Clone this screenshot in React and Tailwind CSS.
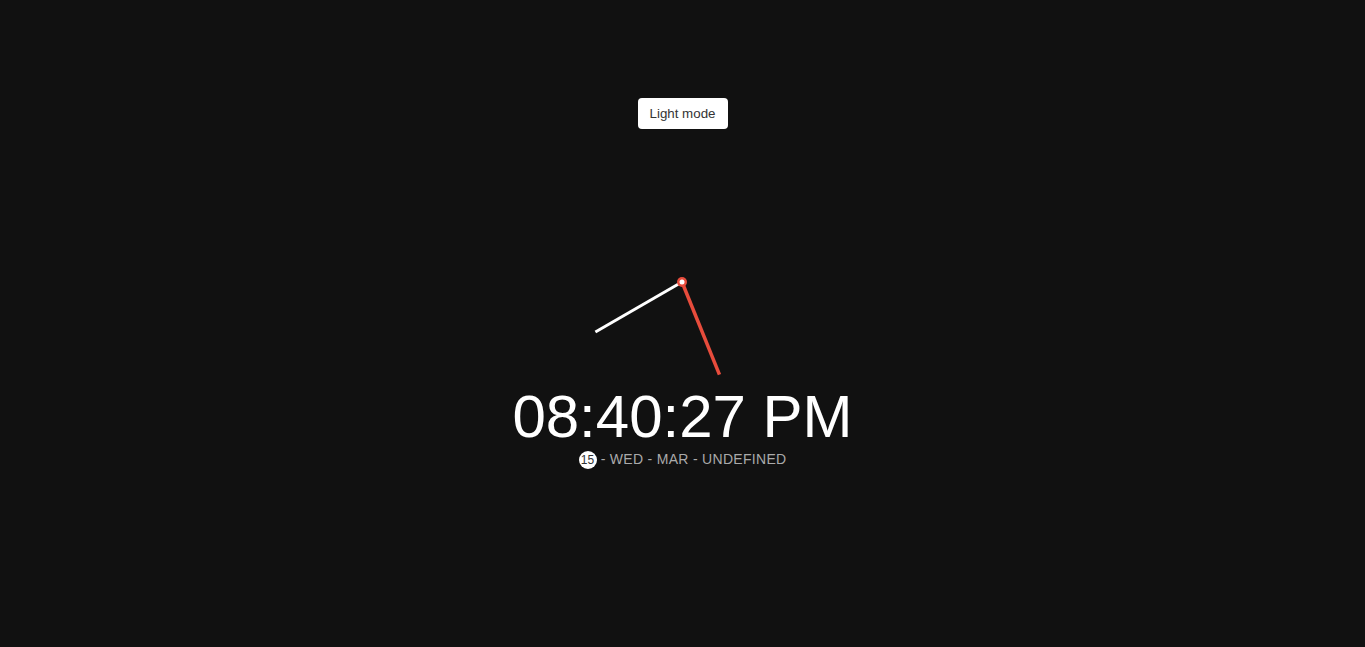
export default function App() {
  const cx = 100;
  const cy = 100;
  const hand = (deg, len) => {
    const r = (deg * Math.PI) / 180;
    return { x2: cx + len * Math.sin(r), y2: cy - len * Math.cos(r) };
  };
  const minute = hand(240, 100);
  const second = hand(158, 100);
  return (
    <div
      className="h-screen w-full overflow-hidden bg-[#111111] flex flex-col items-center"
      style={{ fontFamily: '"Liberation Sans", Arial, sans-serif' }}
    >
      <button className="mt-[98px] bg-white text-[#333333] rounded-[4px] w-[90px] py-2 text-[13.333px] leading-[15px] border-0 cursor-pointer">
        Light mode
      </button>
      <div className="mt-[53px] flex flex-col items-center">
        <svg width="200" height="200" viewBox="0 0 200 200" className="block">
          <line x1={cx} y1={cy} x2={minute.x2} y2={minute.y2} stroke="#ffffff" strokeWidth="3" strokeLinecap="butt" />
          <line x1={cx} y1={cy} x2={second.x2} y2={second.y2} stroke="#e74c3c" strokeWidth="3.5" strokeLinecap="butt" />
          <circle cx={cx} cy={cy} r="5" fill="#e74c3c" />
          <circle cx={cx} cy={cy} r="2.5" fill="#ffffff" />
        </svg>
        <div className="text-white text-[60px] leading-[69px]">08:40:27 PM</div>
        <div className="text-[#aaaaaa] text-[14px] tracking-[0.3px] uppercase leading-[normal]">
          <span className="inline-flex items-center justify-center w-[18px] h-[18px] rounded-full bg-white text-[#333333] text-[12px] leading-[18px] tracking-normal">
            15
          </span>
          {" - WED - MAR - UNDEFINED"}
        </div>
      </div>
    </div>
  );
}
